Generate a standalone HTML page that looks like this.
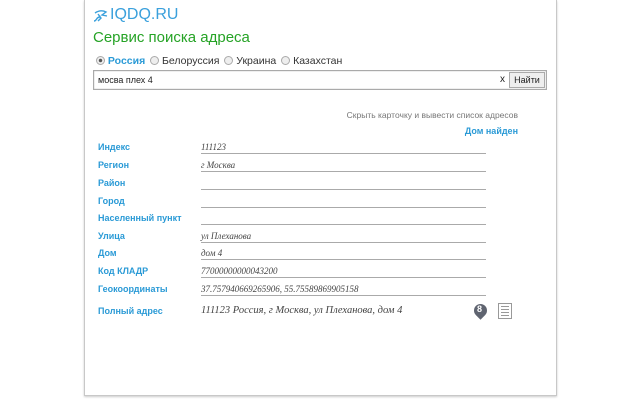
<!DOCTYPE html>
<html><head><meta charset="utf-8"><style>
body{margin:0;width:640px;height:400px;background:#fff;position:relative;overflow:hidden;font-family:"Liberation Sans","DejaVu Sans",sans-serif}
.box{position:absolute;left:84px;top:0;width:471px;height:395px;border:1px solid #c8c8c8;border-top:none;box-shadow:0 1px 2px #ccc;background:#fff}
.a{position:absolute;white-space:nowrap}
.lbl{position:absolute;left:98px;font-size:9px;font-weight:bold;color:#2a9ad6}
.val{position:absolute;left:201px;width:285px;height:15px;border-bottom:1px solid #aaa;font-family:"Liberation Serif",serif;font-style:italic;font-size:9px;color:#444;line-height:18px}
.r{display:inline-block;width:7px;height:7px;border:1px solid #aaa;border-radius:50%;background:#eee;vertical-align:-1px;margin-left:2px}
</style></head><body>
<div class="box"></div>
<svg class="a" style="left:92px;top:9px" width="18" height="14" viewBox="0 0 18 14"><path d="M2 12 C5 12 4 8 8 8 M3 4 C6 2 10 1 14 3 L10 6 L15 7 M6 5 L9 9 L6 12" stroke="#3aa0dc" stroke-width="1.4" fill="none"/></svg>
<div class="a" style="left:110px;top:6px;font-size:16px;color:#3aa0dc">IQDQ.RU</div>
<div class="a" style="left:93px;top:29px;font-size:15px;color:#26a326">Сервис поиска адреса</div>
<div class="a" style="left:96px;top:55px;font-size:10.5px;color:#333">
<span class="r" style="background:radial-gradient(#555 30%,#eee 40%);margin-left:0"></span> <b style="color:#2a9ad6">Россия</b>
<span class="r"></span> Белоруссия
<span class="r"></span> Украина
<span class="r"></span> Казахстан</div>
<div class="a" style="left:93px;top:70px;width:452px;height:18px;border:1px solid #aaa;box-shadow:inset 0 0 1px #999"></div>
<div class="a" style="left:98px;top:75px;font-size:9px;color:#222">мосва плех 4</div>
<div class="a" style="left:500px;top:74px;font-size:10px;color:#222">x</div>
<div class="a" style="left:509px;top:72px;width:34px;height:14px;border:1px solid #aaa;background:#eee;font-size:9px;line-height:14px;text-align:center;color:#222">Найти</div>
<div class="a" style="right:122px;top:110px;font-size:8.5px;color:#777">Скрыть карточку и вывести список адресов</div>
<div class="a" style="right:122px;top:126px;font-size:9px;font-weight:bold;color:#2a9ad6">Дом найден</div>
<div class="lbl" style="top:142px">Индекс</div><div class="val" style="top:138px">111123</div>
<div class="lbl" style="top:160px">Регион</div><div class="val" style="top:156px">г Москва</div>
<div class="lbl" style="top:178px">Район</div><div class="val" style="top:174px"></div>
<div class="lbl" style="top:196px">Город</div><div class="val" style="top:192px"></div>
<div class="lbl" style="top:213px">Населенный пункт</div><div class="val" style="top:209px"></div>
<div class="lbl" style="top:231px">Улица</div><div class="val" style="top:227px">ул Плеханова</div>
<div class="lbl" style="top:248px">Дом</div><div class="val" style="top:244px">дом 4</div>
<div class="lbl" style="top:266px">Код КЛАДР</div><div class="val" style="top:262px">77000000000043200</div>
<div class="lbl" style="top:284px">Геокоординаты</div><div class="val" style="top:280px">37.757940669265906,  55.75589869905158</div>
<div class="lbl" style="top:306px">Полный адрес</div>
<div class="a" style="left:201px;top:305px;font-family:'Liberation Serif',serif;font-style:italic;font-size:10.5px;color:#444">111123 Россия, г Москва, ул Плеханова, дом 4</div>
<div class="a" style="left:474px;top:304px;width:13px;height:13px;border-radius:50% 50% 50% 0;transform:rotate(-45deg);background:#5f6470"></div>
<div class="a" style="left:477px;top:304px;font-size:9px;font-weight:bold;color:#fff">8</div>
<div class="a" style="left:498px;top:303px;width:14px;height:16px;border:1px solid #999;background:repeating-linear-gradient(#fff 0 2px,#999 2px 3px);background-clip:content-box;padding:2px;box-sizing:border-box"></div>
</body></html>
